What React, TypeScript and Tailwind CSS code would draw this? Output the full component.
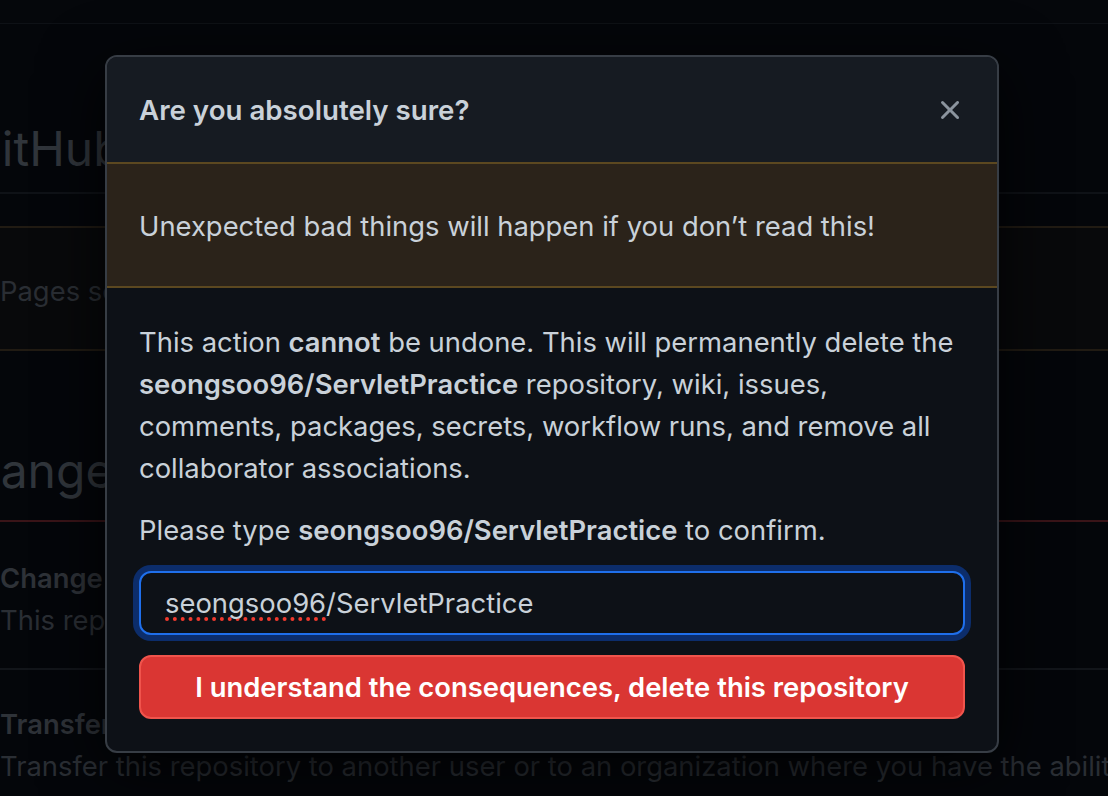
import React from 'react';

const font = { fontFamily: 'Inter, "Noto Sans", "Liberation Sans", sans-serif' };

const CloseIcon = () => (
  <svg width="32" height="32" viewBox="0 0 16 16" fill="#8b949e" aria-hidden="true">
    <path d="M3.72 3.72a.75.75 0 0 1 1.06 0L8 6.94l3.22-3.22a.749.749 0 0 1 1.275.326.749.749 0 0 1-.215.734L9.06 8l3.22 3.22a.749.749 0 0 1-.326 1.275.749.749 0 0 1-.734-.215L8 9.06l-3.22 3.22a.751.751 0 0 1-1.042-.018.751.751 0 0 1-.018-1.042L6.94 8 3.72 4.78a.75.75 0 0 1 0-1.06Z" />
  </svg>
);

const Backdrop = () => (
  <div className="ml-[-34px] w-[1300px] text-[27.4px] leading-[42px] text-[#2a2e34]">
    <div className="h-[24px] border-b border-[#0e1116] bg-[#05070b]" />
    <div className="pt-[89px] pb-[7px] border-b-2 border-[#0f1217]">
      <h2 className="text-[48px] leading-[72px] font-normal text-[#30353b]">GitHub Pages</h2>
    </div>
    <div className="mt-[32px] border-2 border-[#211b13] bg-[#08090b] px-[32px] pt-[42px] pb-[37px] rounded-[12px]">
      Pages settings now has its own dedicated tab! See the new Pages settings
    </div>
    <div className="pt-[84px] pb-[13px]">
      <h2 className="text-[48px] leading-[72px] font-normal text-[#30353b]">Danger Zone</h2>
    </div>
    <div className="border-2 border-[#3a1418] rounded-[12px]">
      <div className="px-[32px] pt-[35px] pb-[27px] border-b-2 border-[#12151a]">
        <div className="font-semibold text-[#2e3238]">Change repository visibility</div>
        <div>This repository is currently public.</div>
      </div>
      <div className="px-[32px] pt-[33px] pb-[32px]">
        <div className="font-semibold text-[#2e3238]">Transfer ownership</div>
        <div className="whitespace-nowrap">Transfer this repository to another user or to an organization where you have the ability to create repositories.</div>
      </div>
    </div>
  </div>
);

export default function App() {
  return (
    <div className="relative w-[1108px] h-[796px] overflow-hidden bg-[#04060a]" style={font}>
      <Backdrop />
      <div className="absolute left-[105px] top-[55px] w-[894px] rounded-[12px] border-2 border-[#373d45] bg-[#0d1117] overflow-hidden shadow-[0_16px_64px_rgba(0,0,0,0.8)] text-[27.4px] leading-[42px] text-[#c9d1d9]">
        <div className="flex items-center justify-between bg-[#161b22] pl-[32px] pr-[31px] pt-[32px] pb-[31px]">
          <h3 className="font-semibold text-[27.7px]">Are you absolutely sure?</h3>
          <button className="flex h-[32px] w-[32px] items-center justify-center">
            <CloseIcon />
          </button>
        </div>
        <div className="border-y-2 border-[#5c4820] bg-[#2b231a] px-[32px] pt-[41px] pb-[39px]">
          Unexpected bad things will happen if you don’t read this!
        </div>
        <div className="px-[32px] pt-[33px] pb-[32px]">
          <p>
            This action <strong className="font-semibold">cannot</strong> be undone. This will permanently delete the{' '}
            <strong className="font-semibold">seongsoo96/ServletPractice</strong> repository, wiki, issues, comments, packages, secrets, workflow runs, and remove all collaborator associations.
          </p>
          <p className="mt-[20px]">
            Please type <strong className="font-semibold">seongsoo96/ServletPractice</strong> to confirm.
          </p>
          <div className="mt-[20px] flex h-[64px] items-center rounded-[12px] border-2 border-[#1f6feb] bg-[#0d1117] px-[24px] shadow-[0_0_0_6px_#0c2d6b]">
            <span>
              <span className="underline decoration-dotted decoration-[#f03a2e] decoration-[4px] underline-offset-[4px] [text-decoration-skip-ink:none]">seongsoo96</span>/ServletPractice
            </span>
          </div>
          <button className="mt-[20px] flex h-[64px] w-full items-center justify-center rounded-[12px] border-2 border-[#f0544c] bg-[#da3633] font-semibold text-white">
            I understand the consequences, delete this repository
          </button>
        </div>
      </div>
    </div>
  );
}
